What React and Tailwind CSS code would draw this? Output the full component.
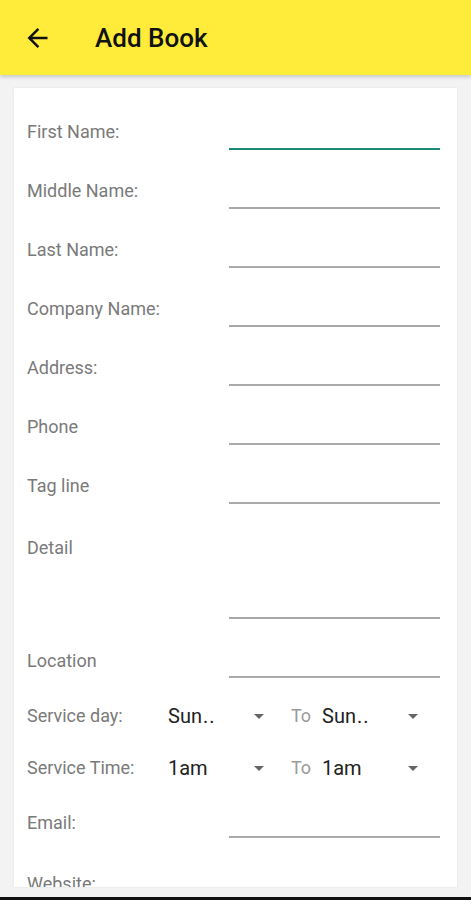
import React from "react";

function Row({ label, focused, h = "h-[59px]", mt = "mt-[31px]" }) {
  return (
    <div className={`flex ${h}`}>
      <div className={`w-[202px] ${mt} text-[18px] leading-[20px] text-[#7a7a7a]`}>{label}</div>
      <div className="w-[211px] flex flex-col justify-end">
        <div className={focused ? "h-[2px] bg-[#1b8a7c]" : "h-[2px] bg-[#a9a9a9]"} />
      </div>
    </div>
  );
}

function Tri() {
  return (
    <svg width="10" height="5" viewBox="0 0 10 5" className="shrink-0">
      <path d="M0 0h10L5 5z" fill="#666" />
    </svg>
  );
}

function Drop({ value, dots }) {
  return (
    <div className="w-[110px] flex items-center justify-between pr-[14px]">
      <span className="text-[20px] leading-[24px] text-[#222]">
        {value}
        {dots && <span className="ml-[1px] tracking-[1px]">..</span>}
      </span>
      <Tri />
    </div>
  );
}

function ServiceRow({ label, value, dots, mt }) {
  return (
    <div className={`flex items-center h-[24px] ${mt}`}>
      <div className="w-[141px] text-[18px] leading-[20px] text-[#7a7a7a]">{label}</div>
      <Drop value={value} dots={dots} />
      <div className="ml-[13px] w-[31px] text-[18px] leading-[20px] text-[#9a9a9a]">To</div>
      <Drop value={value} dots={dots} />
    </div>
  );
}

export default function App() {
  return (
    <div className="h-[900px] w-[471px] flex flex-col bg-[#f3f3f3] overflow-hidden" style={{ fontFamily: "Roboto, 'Noto Sans', sans-serif" }}>
      <div className="h-[75px] shrink-0 bg-[#ffec3a] flex items-center shadow-[0_2px_4px_rgba(0,0,0,0.18)] relative z-10">
        <svg width="21" height="20" viewBox="4 4 16 16" className="ml-[27px]">
          <path d="M20 11H7.83l5.59-5.59L12 4l-8 8 8 8 1.41-1.41L7.83 13H20v-2z" fill="#111" />
        </svg>
        <div className="ml-[47px] text-[26px] font-medium text-[#111] leading-[30px]">Add Book</div>
      </div>
      <div className="flex-1 px-[14px] pt-[13px] pb-[10px] flex flex-col min-h-0">
        <div className="flex-1 bg-white overflow-hidden pl-[13px] pt-[3px] shadow-[0_0_2px_rgba(0,0,0,0.08)]">
          <Row label="First Name:" focused />
          <Row label="Middle Name:" />
          <Row label="Last Name:" />
          <Row label="Company Name:" />
          <Row label="Address:" />
          <Row label="Phone" />
          <Row label="Tag line" />
          <Row label="Detail" h="h-[115px]" mt="mt-[34px]" />
          <Row label="Location" mt="mt-[32px]" />
          <ServiceRow label="Service day:" value="Sun" dots mt="mt-[26px]" />
          <ServiceRow label="Service Time:" value="1am" mt="mt-[28px]" />
          <Row label="Email:" h="h-[58px]" mt="mt-[33px]" />
          <div className="mt-[36px] text-[18px] leading-[20px] text-[#7a7a7a]">Website:</div>
        </div>
      </div>
      <div className="h-[3px] shrink-0 bg-[#111]" />
    </div>
  );
}
